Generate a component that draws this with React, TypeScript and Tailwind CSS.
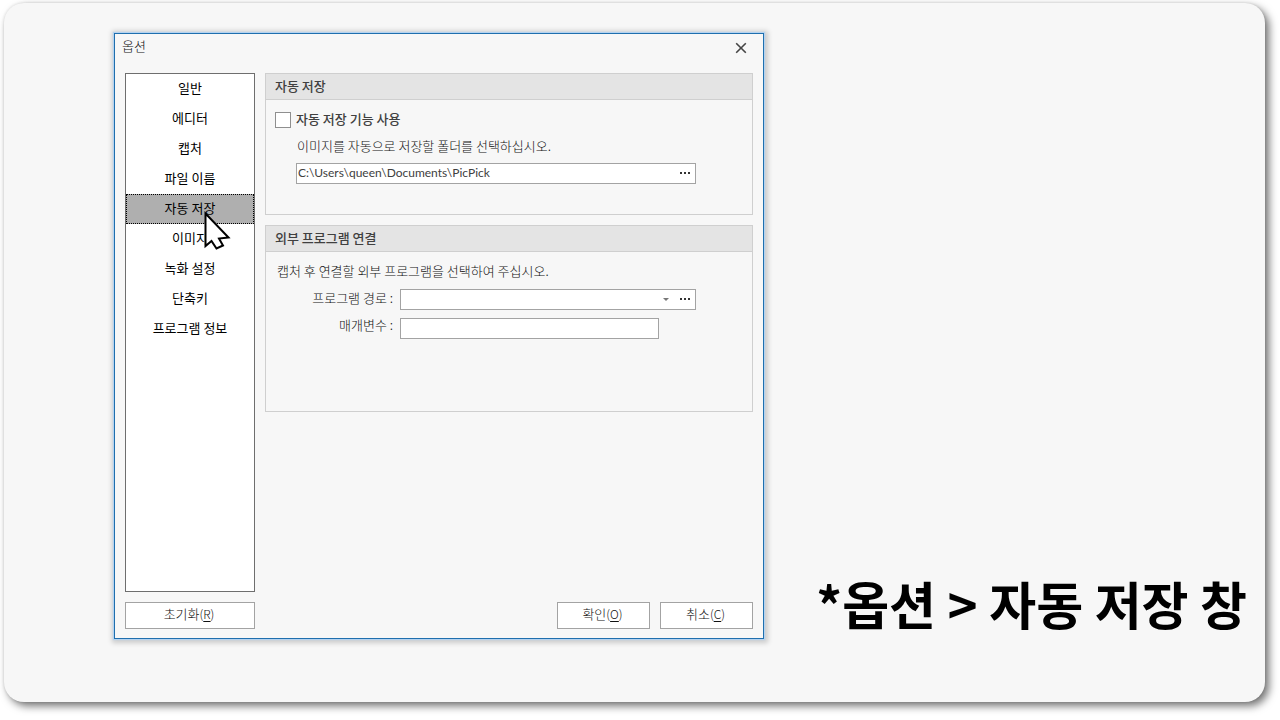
import type { ReactNode } from "react";

const categories = [
  "일반",
  "에디터",
  "캡처",
  "파일 이름",
  "자동 저장",
  "이미지",
  "녹화 설정",
  "단축키",
  "프로그램 정보",
];

const selected = "자동 저장";

function Pointer() {
  return (
    <svg
      className="pointer-events-none absolute top-4 left-[77px]"
      width="30"
      height="42"
      viewBox="0 0 30 42"
      aria-hidden="true"
    >
      <path
        d="M2.5 3.5V36L8.5 31L13.5 38.5L20 35.5L16 28.5L25.5 27.5Z"
        fill="#fff"
        stroke="#000"
        strokeWidth="2"
      />
    </svg>
  );
}

function Group({ title, className, children }: { title: string; className: string; children: ReactNode }) {
  return (
    <section className={`border border-[#cfcfcf] ${className}`}>
      <h2 className="h-[26px] border-b border-[#cfcfcf] bg-[#e4e4e4] pl-[9px] text-[13px] leading-6 font-medium">
        {title}
      </h2>
      {children}
    </section>
  );
}

function BrowseButton({ label }: { label: string }) {
  return (
    <button type="button" aria-label={label} className="flex h-full w-5 items-center justify-center pb-0.5">
      <svg width="12" height="2" viewBox="0 0 12 2" fill="#333" aria-hidden="true">
        <rect x="1" width="2" height="2" />
        <rect x="5" width="2" height="2" />
        <rect x="9" width="2" height="2" />
      </svg>
    </button>
  );
}

function DialogButton({ text, accessKey, className }: { text: string; accessKey: string; className: string }) {
  return (
    <button
      type="button"
      className={`h-[27px] border border-[#a3a3a3] bg-white pr-0.5 pb-1 text-[13px] leading-5 ${className}`}
    >
      {text}
      <span className="text-xs">
        (<span className="underline underline-offset-2">{accessKey}</span>)
      </span>
    </button>
  );
}

function OptionsDialog() {
  return (
    <div
      role="dialog"
      aria-labelledby="dialog-title"
      className="w-[650px] shrink-0 self-start border border-[#1f6fae] bg-[#f7f7f7] px-2.5 pb-[9px] text-[13px] text-[#404040] shadow-[0_0_1px_1px_#b5d3f0,1px_1px_5px_3px_rgba(0,0,0,0.18)]"
    >
      <header className="flex h-[39px] items-start justify-between">
        <h1 id="dialog-title" className="-ml-[3px] leading-6 font-light text-[#111]">
          옵션
        </h1>
        <button type="button" aria-label="닫기" className="flex h-7 w-6 items-center justify-center">
          <svg width="12" height="12" viewBox="0 0 12 12" stroke="#444" strokeWidth="1.6" aria-hidden="true">
            <path d="M1.2 1.2L10.8 10.8M10.8 1.2L1.2 10.8" />
          </svg>
        </button>
      </header>

      <div className="flex gap-2.5">
        <nav className="h-[519px] w-[130px] shrink-0 border border-[#6e6e6e] bg-white text-center text-black">
          <ul>
            {categories.map((name) => (
              <li key={name} className={name === selected ? "relative z-10" : ""}>
                <button
                  type="button"
                  aria-current={name === selected ? "page" : undefined}
                  className={
                    name === selected
                      ? "block h-[30px] w-full border border-dotted border-black bg-[#afafaf] pb-0.5 leading-[26px]"
                      : "block h-[30px] w-full pb-0.5 leading-[26px]"
                  }
                >
                  {name}
                </button>
                {name === selected && <Pointer />}
              </li>
            ))}
          </ul>
        </nav>

        <div className="flex flex-1 flex-col gap-2.5">
          <Group title="자동 저장" className="h-[142px]">
            <div className="pl-[9px]">
              <label className="flex h-10 items-center gap-[5px] font-medium">
                <input type="checkbox" className="size-4 appearance-none border border-[#8f8f8f] bg-white" />
                <span className="pb-0.5">자동 저장 기능 사용</span>
              </label>
              <label htmlFor="folder" className="-mt-1 block pl-[22px] leading-5 font-light text-[#111]">
                이미지를 자동으로 저장할 폴더를 선택하십시오.
              </label>
              <div className="mt-[7px] mr-14 ml-[21px] flex h-[21px] items-center border border-[#a3a3a3] bg-white">
                <input
                  id="folder"
                  type="text"
                  defaultValue="C:\Users\queen\Documents\PicPick"
                  className="min-w-0 flex-1 pb-0.5 pl-px font-['Lato','Open_Sans',sans-serif] text-xs leading-4 outline-none"
                />
                <BrowseButton label="폴더 찾아보기" />
              </div>
            </div>
          </Group>

          <Group title="외부 프로그램 연결" className="h-[187px]">
            <p className="mt-[9px] pl-[11px] leading-5 font-light text-[#111]">
              캡처 후 연결할 외부 프로그램을 선택하여 주십시오.
            </p>
            <div className="mt-2 mr-14 grid grid-cols-[127px_1fr] gap-x-[7px] gap-y-2">
              <label htmlFor="program" className="text-right leading-[18px] font-light text-[#111]">
                프로그램 경로 :
              </label>
              <div className="flex h-[21px] items-center border border-[#a3a3a3] bg-white">
                <div className="relative h-full flex-1">
                  <select id="program" className="block h-full w-full appearance-none outline-none">
                    <option></option>
                  </select>
                  <svg
                    className="pointer-events-none absolute top-2 right-1.5"
                    width="6"
                    height="3"
                    viewBox="0 0 6 3"
                    fill="#777"
                    aria-hidden="true"
                  >
                    <path d="M0 0H6L3 3Z" />
                  </svg>
                </div>
                <BrowseButton label="프로그램 찾아보기" />
              </div>
              <label htmlFor="params" className="text-right leading-[14px] font-light text-[#111]">
                매개변수 :
              </label>
              <input
                id="params"
                type="text"
                className="mr-[37px] h-[21px] border border-[#a3a3a3] bg-white px-1 outline-none"
              />
            </div>
          </Group>
        </div>
      </div>

      <footer className="mt-2.5 flex gap-2.5 font-light text-[#111]">
        <DialogButton text="초기화" accessKey="R" className="mr-auto w-[130px]" />
        <DialogButton text="확인" accessKey="O" className="w-[93px]" />
        <DialogButton text="취소" accessKey="C" className="w-[93px]" />
      </footer>
    </div>
  );
}

export default function App() {
  return (
    <div className="flex min-h-screen bg-white pt-[3px] pr-[15px] pb-[18px] pl-1 font-['Noto_Sans_CJK_KR',sans-serif]">
      <main className="flex flex-1 justify-between rounded-[20px] bg-[#f7f7f7] pt-[30px] pr-[18px] pb-[60px] pl-[110px] shadow-[4px_4px_9px_rgba(0,0,0,0.55),0_0_3px_rgba(0,0,0,0.12)]">
        <OptionsDialog />
        <p className="mb-2 self-end text-[51px] leading-[62px] font-bold whitespace-nowrap text-black">
          *옵션 &gt; 자동 저장 창
        </p>
      </main>
    </div>
  );
}
